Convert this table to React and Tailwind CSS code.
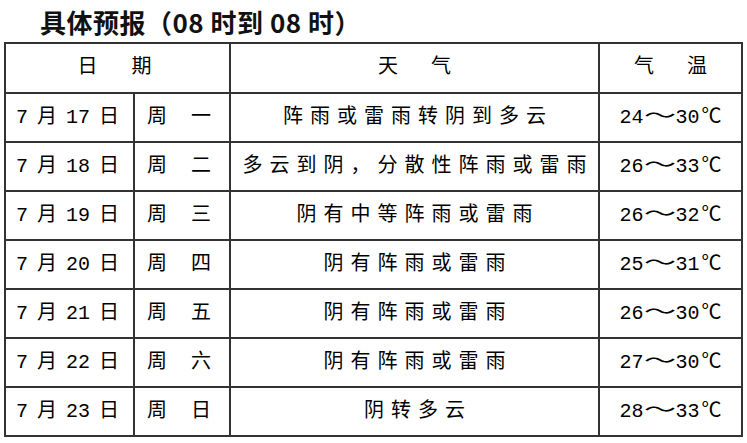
import React from "react";

const rows = [
  ["7", "17", "一", "阵雨或雷雨转阴到多云", "24", "30"],
  ["7", "18", "二", "多云到阴，分散性阵雨或雷雨", "26", "33"],
  ["7", "19", "三", "阴有中等阵雨或雷雨", "26", "32"],
  ["7", "20", "四", "阴有阵雨或雷雨", "25", "31"],
  ["7", "21", "五", "阴有阵雨或雷雨", "26", "30"],
  ["7", "22", "六", "阴有阵雨或雷雨", "27", "30"],
  ["7", "23", "日", "阴转多云", "28", "33"],
];

const cell = "border-r-2 border-b-2 border-[#333] flex items-center h-[49px]";

export default function App() {
  return (
    <div className="w-[747px] h-[443px] bg-white text-black overflow-hidden">
      <div
        className="h-[42px] flex items-center pl-[40px] pt-[2px] text-[26px] font-bold leading-none text-[#111] tracking-[0.5px]"
        style={{ fontFamily: '"Noto Sans CJK SC", sans-serif' }}
      >
        具体预报（08 时到 08 时）
      </div>
      <div className="pl-[4px]">
        <div
          className="grid grid-cols-[129px_96px_369px_143px] w-[739px] border-l-2 border-t-2 border-[#333] text-[20px] leading-none"
          style={{ fontFamily: '"Liberation Mono", "Noto Sans CJK SC", monospace' }}
        >
          <div className="col-span-2 border-r-2 border-b-2 border-[#333] flex items-center justify-center h-[50px] gap-[34px] pr-[6px]">
            <span>日</span>
            <span>期</span>
          </div>
          <div className="border-r-2 border-b-2 border-[#333] flex items-center justify-center h-[50px] gap-[33px]">
            <span>天</span>
            <span>气</span>
          </div>
          <div className="border-r-2 border-b-2 border-[#333] flex items-center justify-center h-[50px] gap-[33px]">
            <span>气</span>
            <span>温</span>
          </div>
          {rows.map((r, i) => (
            <React.Fragment key={i}>
              <div className={cell + " pl-[10px] gap-[9px]"}>
                <span>{r[0]}</span>
                <span>月</span>
                <span>{r[1]}</span>
                <span>日</span>
              </div>
              <div className={cell + " pl-[12px] gap-[24px]"}>
                <span>周</span>
                <span>{r[2]}</span>
              </div>
              <div className={cell + " justify-center tracking-[7px] pl-[7px]"}>{r[3]}</div>
              <div className={cell + " justify-center"}>
                <span>{r[4]}</span>
                <span className="inline-block w-[32px] text-center scale-x-[1.6]">～</span>
                <span>{r[5]}</span>
                <span className="ml-[2px]">℃</span>
              </div>
            </React.Fragment>
          ))}
        </div>
      </div>
    </div>
  );
}
